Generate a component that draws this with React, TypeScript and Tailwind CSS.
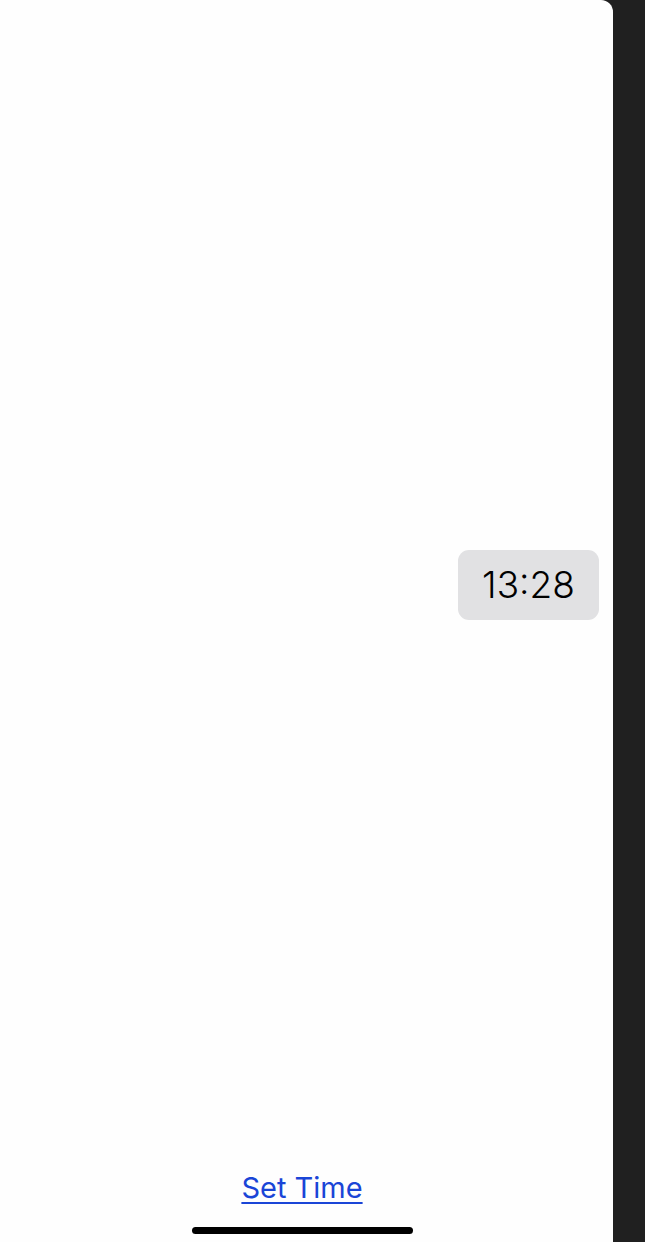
export default function App() {
  return (
    <div className="flex h-[1242px] w-[645px] bg-[#202020]" style={{ fontFamily: 'Inter, "Noto Sans", sans-serif' }}>
      <div className="flex w-[613px] flex-col rounded-tr-[12px] bg-[#fefefe]">
        <div className="flex justify-end pt-[550px] pr-[14px]">
          <div className="flex h-[70px] w-[141px] items-center justify-center rounded-[11px] bg-[#e1e1e3] text-[37px] font-light text-black">
            13:28
          </div>
        </div>
        <div className="flex-1" />
        <div className="flex justify-center pr-[9px] pb-[22px]">
          <a href="#" className="text-[29px] leading-[34px] text-[#1a45d7] underline decoration-[2px] underline-offset-[4px]">
            Set Time
          </a>
        </div>
        <div className="flex justify-center pr-[9px] pb-[8px]">
          <div className="h-[7px] w-[221px] rounded-full bg-black" />
        </div>
      </div>
    </div>
  );
}
